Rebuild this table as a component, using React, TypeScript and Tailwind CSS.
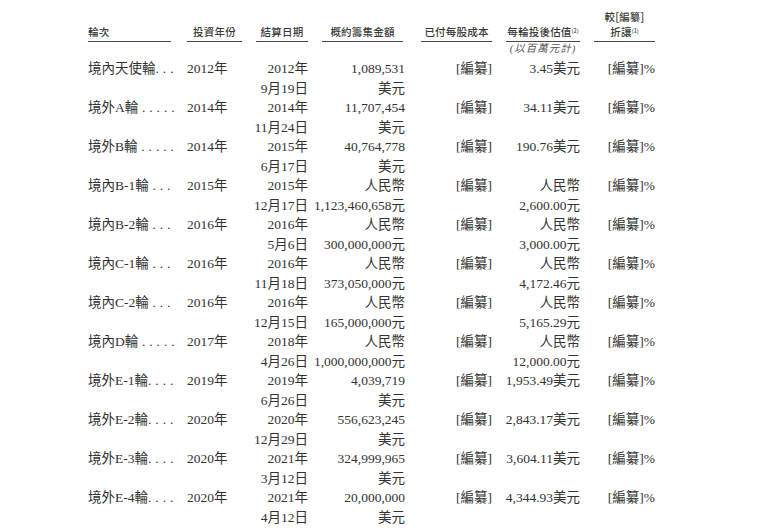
import React from "react";

type Row = {
  label: string;
  dots: string;
  year: string;
  date: [string, string];
  amount: [string, string];
  val: [string, string];
};

const rows: Row[] = [
  { label: "境內天使輪", dots: ". . .", year: "2012年", date: ["2012年", "9月19日"], amount: ["1,089,531", "美元"], val: ["3.45美元", ""] },
  { label: "境外A輪", dots: " . . . . .", year: "2014年", date: ["2014年", "11月24日"], amount: ["11,707,454", "美元"], val: ["34.11美元", ""] },
  { label: "境外B輪", dots: " . . . . .", year: "2014年", date: ["2015年", "6月17日"], amount: ["40,764,778", "美元"], val: ["190.76美元", ""] },
  { label: "境內B-1輪", dots: " . . .", year: "2015年", date: ["2015年", "12月17日"], amount: ["人民幣", "1,123,460,658元"], val: ["人民幣", "2,600.00元"] },
  { label: "境內B-2輪", dots: " . . .", year: "2016年", date: ["2016年", "5月6日"], amount: ["人民幣", "300,000,000元"], val: ["人民幣", "3,000.00元"] },
  { label: "境內C-1輪", dots: " . . .", year: "2016年", date: ["2016年", "11月18日"], amount: ["人民幣", "373,050,000元"], val: ["人民幣", "4,172.46元"] },
  { label: "境內C-2輪", dots: " . . .", year: "2016年", date: ["2016年", "12月15日"], amount: ["人民幣", "165,000,000元"], val: ["人民幣", "5,165.29元"] },
  { label: "境內D輪", dots: " . . . . .", year: "2017年", date: ["2018年", "4月26日"], amount: ["人民幣", "1,000,000,000元"], val: ["人民幣", "12,000.00元"] },
  { label: "境外E-1輪", dots: ". . . .", year: "2019年", date: ["2019年", "6月26日"], amount: ["4,039,719", "美元"], val: ["1,953.49美元", ""] },
  { label: "境外E-2輪", dots: ". . . .", year: "2020年", date: ["2020年", "12月29日"], amount: ["556,623,245", "美元"], val: ["2,843.17美元", ""] },
  { label: "境外E-3輪", dots: ". . . .", year: "2020年", date: ["2021年", "3月12日"], amount: ["324,999,965", "美元"], val: ["3,604.11美元", ""] },
  { label: "境外E-4輪", dots: ". . . .", year: "2020年", date: ["2021年", "4月12日"], amount: ["20,000,000", "美元"], val: ["4,344.93美元", ""] },
];

const C1 = "w-[85px] shrink-0";
const C2 = "ml-[14px] w-[55px] shrink-0";
const C3 = "ml-[14px] w-[52px] shrink-0";
const C4 = "ml-[14px] w-[83px] shrink-0";
const C5 = "ml-[16px] w-[71px] shrink-0";
const C6 = "ml-[14px] w-[74px] shrink-0";
const C7 = "ml-[14px] w-[61px] shrink-0";

const HEAD = "border-b border-[#4a4a4a] pb-[2px] text-center whitespace-nowrap";

export default function App() {
  return (
    <div className="w-[762px] h-[531px] overflow-hidden bg-white pl-[88px] pt-[9px] text-[#333] font-['Liberation_Serif','Noto_Sans_CJK_TC',serif]">
      {/* Header */}
      <div className="flex items-end text-[10.5px] leading-[15px] tracking-[0.2px] text-[#3a3a3a] font-['Noto_Sans_CJK_TC',sans-serif] font-medium">
        <div className={C1}>
          <div className="border-b border-[#4a4a4a] pb-[2px] w-[83px]">輪次</div>
        </div>
        <div className={C2}>
          <div className={HEAD}>投資年份</div>
        </div>
        <div className={C3}>
          <div className={HEAD}>結算日期</div>
        </div>
        <div className={C4}>
          <div className={`${HEAD} w-[81px]`}>概約籌集金額</div>
        </div>
        <div className={C5}>
          <div className={HEAD}>已付每股成本</div>
        </div>
        <div className={C6}>
          <div className={HEAD}>
            每輪投後估值<sup className="text-[5.5px] tracking-normal">(2)</sup>
          </div>
        </div>
        <div className={C7}>
          <div className={HEAD}>
            <div>較[編纂]</div>
            <div>
              折讓<sup className="text-[5.5px] tracking-normal">(1)</sup>
            </div>
          </div>
        </div>
      </div>
      {/* Sub heading */}
      <div className="flex text-[10.5px] leading-[14px]">
        <div className={C1} />
        <div className={C2} />
        <div className={C3} />
        <div className={C4} />
        <div className={C5} />
        <div className={`${C6} text-center italic text-[#555] tracking-[1px] whitespace-nowrap`}>(以百萬元計)</div>
        <div className={C7} />
      </div>
      {/* Rows */}
      <div className="mt-[3px] flex flex-col text-[13.5px] leading-[19.5px] whitespace-nowrap">
        {rows.map((r) => (
          <div key={r.label} className="flex">
            <div className={`${C1} whitespace-pre`}>
              {r.label}
              <span className="tracking-[0.3px]">{r.dots}</span>
            </div>
            <div className={C2}>{r.year}</div>
            <div className={`${C3} flex flex-col items-end`}>
              <div>{r.date[0]}</div>
              <div>{r.date[1]}</div>
            </div>
            <div className={`${C4} flex flex-col items-end`}>
              <div>{r.amount[0]}</div>
              <div>{r.amount[1]}</div>
            </div>
            <div className={`${C5} text-right`}>[編纂]</div>
            <div className={`${C6} flex flex-col items-end`}>
              <div>{r.val[0]}</div>
              {r.val[1] ? <div>{r.val[1]}</div> : null}
            </div>
            <div className={`${C7} text-right`}>[編纂]%</div>
          </div>
        ))}
      </div>
    </div>
  );
}
